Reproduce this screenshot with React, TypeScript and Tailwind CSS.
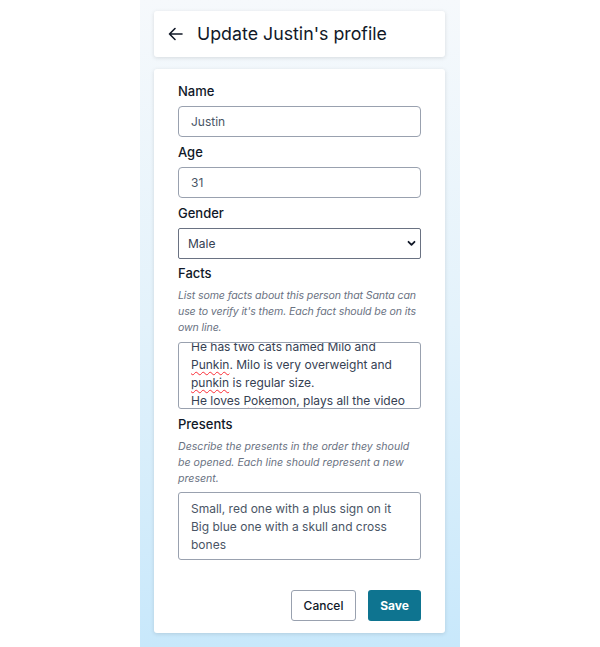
import { useState } from "react";

const Label = ({ children }: { children: React.ReactNode }) => (
  <label className="block text-[13px] leading-[20px] font-medium text-gray-900">
    {children}
  </label>
);

const Hint = ({
  children,
  tight,
}: {
  children: React.ReactNode;
  tight?: boolean;
}) => (
  <p
    className={
      tight
        ? "mt-[5px] text-[10.6px] leading-[16px] tracking-[-0.12px] italic text-gray-500"
        : "mt-[5px] text-[10.6px] leading-[16px] italic text-gray-500"
    }
  >
    {children}
  </p>
);

const Squiggle = ({ children }: { children: React.ReactNode }) => (
  <span className="underline decoration-wavy decoration-red-500 decoration-1 underline-offset-2">
    {children}
  </span>
);

const App = () => {
  const [name, setName] = useState("Justin");
  const [age, setAge] = useState("31");
  const [gender, setGender] = useState("Male");
  const [presents, setPresents] = useState(
    "Small, red one with a plus sign on it\nBig blue one with a skull and cross bones"
  );

  return (
    <div
      className="min-h-[647px] w-full bg-white flex justify-center"
      style={{ fontFamily: "Inter, 'Noto Sans', sans-serif" }}
    >
      <div className="w-[320px] min-h-[647px] bg-gradient-to-b from-[#f6f9fc] via-[#e3f2fb] to-[#c8e8fb] pl-[14px] pr-[15px] pt-[11px] pb-[14px] flex flex-col gap-[12px]">
        <div className="bg-white rounded-[3px] shadow-[0_1px_4px_rgba(0,0,0,0.12)] h-[46px] flex items-center pl-[14px] gap-[14px]">
          <svg
            width="15"
            height="14"
            viewBox="0 0 15 14"
            fill="none"
            stroke="#111827"
            strokeWidth="1.6"
            strokeLinecap="round"
            strokeLinejoin="round"
          >
            <path d="M14 7H1.5M7 1.5L1.5 7L7 12.5" />
          </svg>
          <h1 className="text-[17.8px] font-normal text-gray-900 leading-none">
            Update Justin's profile
          </h1>
        </div>

        <div className="bg-white rounded-[3px] shadow-[0_1px_4px_rgba(0,0,0,0.12)] px-[24px] pt-[12px] pb-[12px]">
          <Label>Name</Label>
          <input
            value={name}
            onChange={(e) => setName(e.target.value)}
            className="mt-[5px] w-full h-[31px] border border-gray-400 rounded-[4px] px-[12px] text-[12px] text-gray-600 outline-none"
          />

          <div className="mt-[5px]">
            <Label>Age</Label>
          </div>
          <input
            value={age}
            onChange={(e) => setAge(e.target.value)}
            className="mt-[5px] w-full h-[31px] border border-gray-400 rounded-[4px] px-[12px] text-[12px] text-gray-600 outline-none"
          />

          <div className="mt-[5px]">
            <Label>Gender</Label>
          </div>
          <div className="relative mt-[5px]">
            <select
              value={gender}
              onChange={(e) => setGender(e.target.value)}
              className="appearance-none w-full h-[31px] border border-gray-500 rounded-[2px] px-[9px] text-[12px] text-gray-700 bg-white outline-none"
            >
              <option>Male</option>
              <option>Female</option>
              <option>Other</option>
            </select>
            <svg
              className="absolute right-[5px] top-[12px] pointer-events-none"
              width="9"
              height="7"
              viewBox="0 0 9 7"
              fill="none"
              stroke="#111827"
              strokeWidth="1.8"
              strokeLinecap="round"
              strokeLinejoin="round"
            >
              <path d="M1.5 1.8L4.5 4.8L7.5 1.8" />
            </svg>
          </div>

          <div className="mt-[4px]">
            <Label>Facts</Label>
          </div>
          <Hint tight>
            List some facts about this person that Santa can use to verify it's
            them. Each fact should be on its own line.
          </Hint>
          <div className="mt-[6px] h-[67px] border border-gray-400 rounded-[3px] overflow-hidden px-[12px]">
            <div className="-mt-[5px] text-[12px] leading-[18px] text-gray-700 whitespace-nowrap">
              <div>He has two cats named Milo and</div>
              <div>
                <Squiggle>Punkin</Squiggle>. Milo is very overweight and
              </div>
              <div>
                <Squiggle>punkin</Squiggle> is regular size.
              </div>
              <div>
                He loves <Squiggle>Pokemon</Squiggle>, plays all the video
              </div>
            </div>
          </div>

          <div className="mt-[5px]">
            <Label>Presents</Label>
          </div>
          <Hint>
            Describe the presents in the order they should be opened. Each line
            should represent a new present.
          </Hint>
          <textarea
            value={presents}
            onChange={(e) => setPresents(e.target.value)}
            spellCheck={false}
            className="mt-[5px] block w-full h-[68px] border border-gray-400 rounded-[3px] px-[12px] pt-[7px] pb-[5px] text-[12px] leading-[18px] text-gray-600 resize-none outline-none"
          />

          <div className="mt-[30px] flex justify-end gap-[12px]">
            <button className="h-[31px] w-[65px] border border-gray-400 rounded-[3px] text-[12px] font-medium text-gray-900 bg-white">
              Cancel
            </button>
            <button className="h-[31px] w-[53px] rounded-[3px] text-[12px] font-bold text-white bg-[#0e7490]">
              Save
            </button>
          </div>
        </div>
      </div>
    </div>
  );
};

export default App;
